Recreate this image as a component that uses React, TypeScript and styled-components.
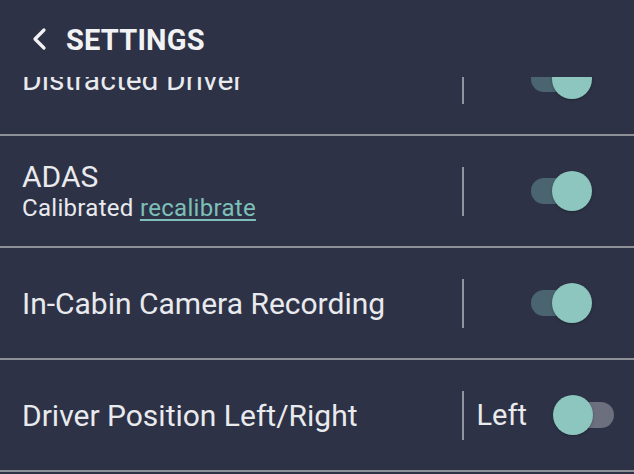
import React, { useLayoutEffect, useRef } from "react";
import styled, { createGlobalStyle } from "styled-components";

const Global = createGlobalStyle`
  html, body { margin: 0; padding: 0; background: #2d3246; }
  * { box-sizing: border-box; }
`;

const Page = styled.div`
  width: 634px;
  height: 474px;
  background: #2d3246;
  color: #e9eaee;
  font-family: Roboto, "Noto Sans", sans-serif;
  display: flex;
  flex-direction: column;
  overflow: hidden;
`;

const Header = styled.header`
  height: 77px;
  flex: none;
  display: flex;
  align-items: center;
  padding-left: 31px;
  gap: 19px;
`;

const BackButton = styled.button`
  background: none;
  border: none;
  padding: 0;
  display: flex;
  align-items: center;
  color: #f2f2f4;
  cursor: pointer;
`;

const Title = styled.h1`
  margin: 0;
  font-size: 29px;
  font-weight: 700;
  letter-spacing: 0.2px;
  color: #f2f2f4;
  padding-top: 2px;
`;

const Scroller = styled.div`
  flex: 1;
  overflow: hidden;
`;

const List = styled.ul`
  list-style: none;
  margin: 0;
  padding: 0 0 40px;
`;

const Row = styled.li`
  height: 112px;
  display: flex;
  align-items: center;
  padding-left: 22px;
  border-bottom: 2px solid #8e9098;
`;

const Labels = styled.div`
  flex: 1;
  display: flex;
  flex-direction: column;
`;

const RowTitle = styled.div`
  font-size: 30px;
  line-height: 35px;
`;

const Sub = styled.div`
  font-size: 24px;
  line-height: 29px;
  letter-spacing: 0.3px;
`;

const Link = styled.a`
  color: #7dc0b9;
  text-decoration: underline;
  text-underline-offset: 3px;
`;

const Divider = styled.div`
  width: 2px;
  height: 49px;
  background: #9093a0;
  flex: none;
`;

const ControlCell = styled.div<{ $padRight: number }>`
  width: 170px;
  flex: none;
  display: flex;
  align-items: center;
  justify-content: flex-end;
  padding-right: ${(p) => p.$padRight}px;
  gap: 26px;
`;

const ValueLabel = styled.span`
  font-size: 29px;
`;

const SwitchBox = styled.div`
  position: relative;
  width: 62px;
  height: 40px;
  flex: none;
`;

const Track = styled.div<{ $on: boolean }>`
  position: absolute;
  left: 1px;
  top: 7px;
  width: 60px;
  height: 26px;
  border-radius: 13px;
  background: ${(p) => (p.$on ? "#4b6570" : "#6c6f7e")};
`;

const Knob = styled.div<{ $on: boolean }>`
  position: absolute;
  top: 0;
  left: ${(p) => (p.$on ? "22px" : "0")};
  width: 40px;
  height: 40px;
  border-radius: 50%;
  background: #8cc6bf;
  box-shadow: 0 1px 3px rgba(0, 0, 0, 0.25);
`;

function Switch({ on }: { on: boolean }) {
  return (
    <SwitchBox>
      <Track $on={on} />
      <Knob $on={on} />
    </SwitchBox>
  );
}

type Item = {
  title: string;
  sub?: boolean;
  on: boolean;
  label?: string;
};

const items: Item[] = [
  { title: "Distracted Driver", on: true },
  { title: "ADAS", sub: true, on: true },
  { title: "In-Cabin Camera Recording", on: true },
  { title: "Driver Position Left/Right", on: false, label: "Left" },
];

export default function App() {
  const ref = useRef<HTMLDivElement>(null);
  useLayoutEffect(() => {
    if (ref.current) ref.current.scrollTop = 53;
  }, []);
  return (
    <>
      <Global />
      <Page>
        <Header>
          <BackButton aria-label="Back">
            <svg width="16" height="24" viewBox="0 0 16 24" fill="none">
              <path d="M13 3 L4 12 L13 21" stroke="currentColor" strokeWidth="3.2" strokeLinecap="round" strokeLinejoin="round" />
            </svg>
          </BackButton>
          <Title>SETTINGS</Title>
        </Header>
        <Scroller ref={ref}>
          <List>
            {items.map((it) => (
              <Row key={it.title}>
                <Labels>
                  <RowTitle>{it.title}</RowTitle>
                  {it.sub && (
                    <Sub>
                      Calibrated <Link href="#">recalibrate</Link>
                    </Sub>
                  )}
                </Labels>
                <Divider />
                <ControlCell $padRight={it.label ? 19 : 42}>
                  {it.label && <ValueLabel>{it.label}</ValueLabel>}
                  <Switch on={it.on} />
                </ControlCell>
              </Row>
            ))}
          </List>
        </Scroller>
      </Page>
    </>
  );
}
